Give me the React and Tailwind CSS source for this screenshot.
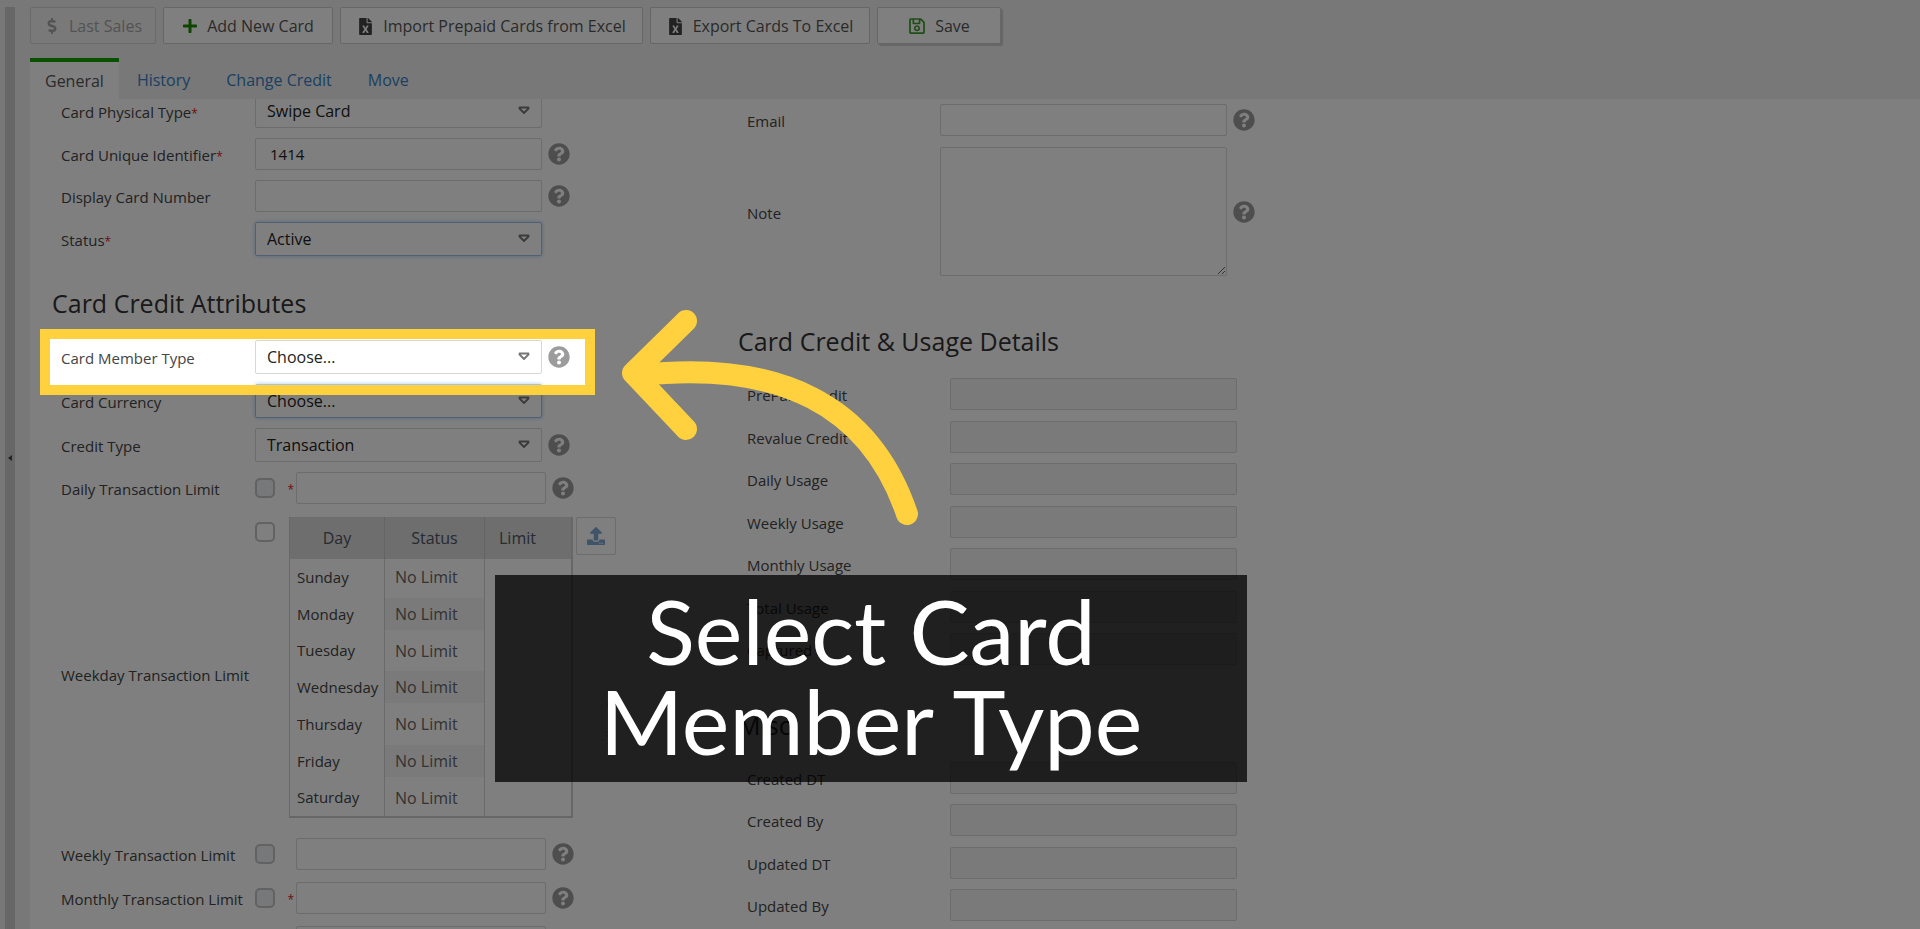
import React, { useState } from "react";
import {
  FaDollarSign,
  FaFileExcel,
  FaPlus,
  FaQuestionCircle,
  FaRegSave,
  FaUpload,
} from "react-icons/fa";

const weekdays = [
  "Sunday",
  "Monday",
  "Tuesday",
  "Wednesday",
  "Thursday",
  "Friday",
  "Saturday",
];

const usageFields = [
  { name: "prepaidCredit", label: "PrePaid Credit" },
  { name: "revalueCredit", label: "Revalue Credit" },
  { name: "dailyUsage", label: "Daily Usage" },
  { name: "weeklyUsage", label: "Weekly Usage" },
  { name: "monthlyUsage", label: "Monthly Usage" },
  { name: "totalUsage", label: "Total Usage" },
  { name: "captured", label: "Captured" },
];

const miscFields = [
  { name: "createdDt", label: "Created DT" },
  { name: "createdBy", label: "Created By" },
  { name: "updatedDt", label: "Updated DT" },
  { name: "updatedBy", label: "Updated By" },
];

const Required = () => <span className="text-xs text-[#e02020]">*</span>;

const Help = () => (
  <FaQuestionCircle className="ml-[6px] size-[22px] shrink-0 text-[#9c9c9c]" />
);

const ToolbarButton = ({ icon, children, className }) => (
  <button
    type="button"
    className={`flex h-[37px] items-center justify-center gap-[9px] whitespace-nowrap rounded-xs border pt-px ${className}`}
  >
    {icon}
    {children}
  </button>
);

const Heading = ({ children, className }) => (
  <h2 className={`mb-[18px] text-[25px] leading-[38px] text-[#333] ${className}`}>
    {children}
  </h2>
);

const FieldLabel = ({ name, children, className }) => (
  <label
    htmlFor={name}
    className={`shrink-0 whitespace-nowrap pt-[2px] text-[15px] leading-5 text-[#444] ${className}`}
  >
    {children}
  </label>
);

const SelectRow = ({ name, label, required, value, help, active }) => (
  <div className="flex items-center">
    <FieldLabel name={name} className="w-[194px]">
      {label}
      {required && <Required />}
    </FieldLabel>
    <div className="relative">
      <select
        id={name}
        name={name}
        defaultValue={value}
        className={`block h-[34px] w-[287px] appearance-none rounded-xs border bg-white pl-[11px] text-base text-[#222] outline-none ${
          active
            ? "border-[#a3c3e6] shadow-[0_0_4px_#a9cdf5]"
            : "border-[#d8d8d8]"
        }`}
      >
        <option>{value}</option>
      </select>
      <svg
        viewBox="0 0 12 10"
        className="pointer-events-none absolute right-3 top-3 h-[10px] w-3"
      >
        <path
          d="M1.5 1.5h9v1L6 7 1.5 2.5z"
          fill="none"
          stroke="#777"
          strokeWidth="1.8"
          strokeLinejoin="round"
        />
      </svg>
    </div>
    {help && <Help />}
  </div>
);

const TextRow = ({ name, label, required, value, help, labelWidth }) => (
  <div className="flex items-center">
    <FieldLabel name={name} className={labelWidth}>
      {label}
      {required && <Required />}
    </FieldLabel>
    <input
      id={name}
      name={name}
      type="text"
      defaultValue={value}
      className="h-8 w-[287px] rounded-xs border border-[#d8d8d8] bg-white px-[14px] text-[15px] text-[#222] outline-none"
    />
    {help && <Help />}
  </div>
);

const ReadOnlyRow = ({ name, label }) => (
  <div className="flex h-8 items-center">
    <FieldLabel name={name} className="w-[203px]">
      {label}
    </FieldLabel>
    <input
      id={name}
      name={name}
      type="text"
      readOnly
      className="h-8 w-[287px] rounded-xs border border-[#d8d8d8] bg-[#f5f5f5] px-[14px] text-[15px] outline-none"
    />
  </div>
);

const LimitRow = ({ name, label, required }) => (
  <div className="flex items-center">
    <FieldLabel name={name} className="w-[194px]">
      {label}
    </FieldLabel>
    <input
      type="checkbox"
      disabled
      aria-label={`Enable ${label}`}
      className="size-5 shrink-0 appearance-none rounded-[5px] border-2 border-[#c4c4c4] bg-[#eef0f3]"
    />
    <span className="w-[21px] shrink-0 pr-[2px] text-right leading-5">
      {required && <Required />}
    </span>
    <input
      id={name}
      name={name}
      type="text"
      className="h-8 w-[250px] rounded-xs border border-[#d8d8d8] bg-white px-[14px] text-[15px] outline-none"
    />
    <Help />
  </div>
);

const WeekdayTable = () => (
  <table className="h-[301px] w-[284px] table-fixed border-collapse border-b-2 border-l border-r-2 border-[#cfcfcf] text-[15px]">
    <thead>
      <tr className="h-[42px] bg-[#dcdcdc] text-base text-[#4c5464]">
        <th className="w-[95px] border-r border-[#c8c8c8] font-normal">Day</th>
        <th className="w-[100px] border-r border-[#c8c8c8] font-normal">Status</th>
        <th className="pl-[14px] text-left font-normal">Limit</th>
      </tr>
    </thead>
    <tbody>
      {weekdays.map((day, index) => (
        <tr key={day}>
          <td className="border-r border-[#d4d4d4] pl-[7px] text-[#444]">{day}</td>
          <td className="border-r border-[#d4d4d4] text-base text-[#666]">
            <div
              className={`h-8 pl-[10px] leading-8 ${
                index % 2 === 1 ? "bg-[#f4f4f4]" : "bg-white"
              }`}
            >
              No Limit
            </div>
          </td>
          <td></td>
        </tr>
      ))}
    </tbody>
  </table>
);

const CardForm = () => (
  <form className="-mt-[5px] flex">
    <div className="w-[708px] shrink-0 pl-[31px]">
      <div className="flex flex-col gap-[10px]">
        <SelectRow name="physicalType" label="Card Physical Type" required value="Swipe Card" />
        <TextRow
          name="uniqueId"
          label="Card Unique Identifier"
          required
          value="1414"
          help
          labelWidth="w-[194px]"
        />
        <TextRow name="displayNumber" label="Display Card Number" help labelWidth="w-[194px]" />
        <SelectRow name="status" label="Status" required value="Active" active />
      </div>

      <Heading className="-ml-[9px] mt-7">Card Credit Attributes</Heading>
      <div className="flex flex-col gap-[10px]">
        <SelectRow name="memberType" label="Card Member Type" value="Choose..." help />
        <SelectRow name="currency" label="Card Currency" value="Choose..." active />
        <SelectRow name="creditType" label="Credit Type" value="Transaction" help />
        <LimitRow name="dailyLimit" label="Daily Transaction Limit" required />
      </div>

      <div className="mb-5 mt-[13px] flex items-center">
        <FieldLabel name="weekdayLimit" className="mt-3 w-[194px]">
          Weekday Transaction Limit
        </FieldLabel>
        <input
          id="weekdayLimit"
          type="checkbox"
          className="mr-[14px] mt-[5px] size-5 shrink-0 appearance-none self-start rounded-[5px] border-2 border-[#c4c4c4] bg-white"
        />
        <WeekdayTable />
        <button
          type="button"
          aria-label="Upload limits"
          className="ml-[3px] flex h-[38px] w-10 items-center justify-center self-start rounded-xs border border-[#d8d8d8] bg-white"
        >
          <FaUpload className="size-[18px] text-[#7ea8d2]" />
        </button>
      </div>

      <div className="flex flex-col gap-3">
        <LimitRow name="weeklyLimit" label="Weekly Transaction Limit" />
        <LimitRow name="monthlyLimit" label="Monthly Transaction Limit" required />
        <input
          type="text"
          aria-label="Total limit"
          className="ml-[235px] h-8 w-[250px] rounded-xs border border-[#d8d8d8] bg-white px-[14px] text-[15px] outline-none"
        />
      </div>
    </div>

    <div className="pl-[9px] pt-[10px]">
      <TextRow name="email" label="Email" help labelWidth="w-[193px]" />
      <div className="mt-[11px] flex items-center">
        <FieldLabel name="note" className="w-[193px]">
          Note
        </FieldLabel>
        <textarea
          id="note"
          name="note"
          className="block h-[129px] w-[287px] rounded-xs border border-[#d8d8d8] bg-white px-[14px] text-[15px] outline-none"
        />
        <Help />
      </div>

      <Heading className="-ml-[9px] mt-[46px]">Card Credit &amp; Usage Details</Heading>
      <div className="flex h-[287px] flex-col justify-between">
        {usageFields.map((field) => (
          <ReadOnlyRow key={field.name} name={field.name} label={field.label} />
        ))}
      </div>

      <Heading className="-ml-[9px] mt-[41px]">Misc</Heading>
      <div className="flex h-[159px] flex-col justify-between">
        {miscFields.map((field) => (
          <ReadOnlyRow key={field.name} name={field.name} label={field.label} />
        ))}
      </div>
    </div>
  </form>
);

// Dims the page and leaves a window on the field the step is about
const TutorialOverlay = () => (
  <>
    <div className="absolute left-10 top-[329px] h-[66px] w-[555px] border-10 border-[#ffd13f] shadow-[0_0_0_3000px_rgba(0,0,0,0.5)]"></div>
    <svg
      viewBox="610 300 310 240"
      className="absolute left-[610px] top-[300px] h-[240px] w-[310px]"
      fill="none"
      stroke="#ffd13f"
      strokeWidth="22"
      strokeLinecap="round"
      strokeLinejoin="round"
    >
      <path d="M686 321L633 373L686 429" />
      <path d="M640 375C780 360 870 405 907 514" />
    </svg>
    <p className="absolute left-[495px] top-[575px] flex h-[207px] w-[752px] items-center justify-center bg-black/75 px-24 pb-2 text-center font-['Lato',sans-serif] text-[90px] leading-[90px] text-white">
      Select Card Member Type
    </p>
  </>
);

const App = () => {
  const [tab, setTab] = useState("General");

  return (
    <div className="relative flex h-screen overflow-hidden bg-[#f0f0f0] pl-[5px] font-['Open_Sans','Noto_Sans',sans-serif] text-base">
      <div className="mt-[7px] flex w-[10px] shrink-0 items-center justify-center bg-[#cfcfcf] pb-5">
        <svg viewBox="0 0 4 6" className="h-[6px] w-1">
          <path d="M4 0v6L0 3z" fill="#444" />
        </svg>
      </div>

      <div className="ml-[15px] flex min-w-0 flex-1 flex-col">
        <div className="flex gap-[7px] pt-[7px] text-[#555]">
          <ToolbarButton
            icon={<FaDollarSign className="size-4" />}
            className="w-[126px] border-[#d4d4d4] bg-[#f3f3f3] text-[#a6a6a6]"
          >
            Last Sales
          </ToolbarButton>
          <ToolbarButton
            icon={<FaPlus className="size-4 text-[#1c8a06]" />}
            className="w-[170px] border-[#cdcdcd] bg-white"
          >
            Add New Card
          </ToolbarButton>
          <ToolbarButton
            icon={<FaFileExcel className="size-[17px] text-[#444]" />}
            className="w-[303px] border-[#cdcdcd] bg-white"
          >
            Import Prepaid Cards from Excel
          </ToolbarButton>
          <ToolbarButton
            icon={<FaFileExcel className="size-[17px] text-[#444]" />}
            className="w-[220px] border-[#cdcdcd] bg-white"
          >
            Export Cards To Excel
          </ToolbarButton>
          <ToolbarButton
            icon={<FaRegSave className="size-[18px] text-[#3c9a2c]" />}
            className="w-[124px] border-[#cdcdcd] bg-white shadow-[2px_2px_1px_#c9cfc9]"
          >
            Save
          </ToolbarButton>
        </div>

        <nav className="mt-[14px] flex h-[41px]">
          {["General", "History", "Change Credit", "Move"].map((name) => (
            <button
              key={name}
              type="button"
              onClick={() => setTab(name)}
              className={
                tab === name
                  ? "border-t-4 border-[#12a000] bg-white px-[15px] text-[#555]"
                  : "px-[18px] pt-[3px] text-[#3580c4]"
              }
            >
              {name}
            </button>
          ))}
        </nav>

        <main className="min-h-0 flex-1 overflow-hidden bg-white">
          <CardForm />
        </main>
      </div>

      <TutorialOverlay />
    </div>
  );
};

export default App;
